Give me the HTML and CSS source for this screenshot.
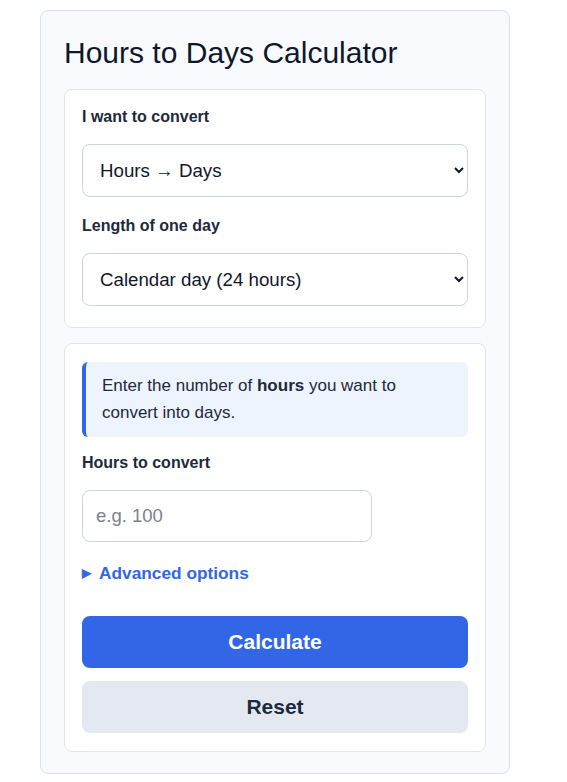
FILE: index.html
```html
<!DOCTYPE html>
<html lang="en">
<head>
  <meta charset="UTF-8">
  <title>Hours to Days Calculator</title>
  <meta name="viewport" content="width=device-width, initial-scale=1">
  <link rel="stylesheet" href="styles.css">
</head>
<body>

  <div class="calc">
    <h1>Hours to Days Calculator</h1>

    <!-- settings -->
    <div class="panel">
      <label class="field-label" for="mode">I want to convert</label>
      <select id="mode" class="field">
        <option>Hours → Days</option>
        <option>Days → Hours</option>
      </select>

      <label class="field-label" for="dayLength">Length of one day</label>
      <select id="dayLength" class="field">
        <option>Calendar day (24 hours)</option>
        <option>Work day (8 hours)</option>
      </select>
    </div>

    <!-- input -->
    <div class="panel">
      <div class="hint">
        Enter the number of <b>hours</b> you want to convert into days.
      </div>

      <label class="field-label" for="hours">Hours to convert</label>
      <input id="hours" class="field field-short" type="text" placeholder="e.g. 100">

      <details class="advanced">
        <summary>Advanced options</summary>
      </details>

      <button class="btn btn-primary">Calculate</button>
      <button class="btn btn-secondary">Reset</button>
    </div>
  </div>

</body>
</html>
```

FILE: styles.css
```css
body {
  margin: 0;
  padding: 10px 0 8px 40px;
  font-family: "Liberation Sans", Arial, sans-serif;
  background: #fff;
  color: #1e293b;
}
.calc {
  width: 470px;
  box-sizing: border-box;
  background: #f8fafd;
  border: 1px solid #dbe2ec;
  border-radius: 8px;
  padding: 0 23px 21px;
}
h1 {
  margin: 0;
  padding: 25px 0 20px;
  font-size: 30px;
  font-weight: normal;
  line-height: 33px;
  color: #0f172a;
}
.panel {
  background: #fff;
  border: 1px solid #dfe5ee;
  border-radius: 8px;
  padding: 17px 17px 21px;
  margin-bottom: 15px;
}
.panel:last-child {
  margin-bottom: 0;
  padding-top: 18px;
  padding-bottom: 18px;
}
.field-label {
  display: block;
  font-size: 16px;
  font-weight: bold;
  line-height: 20px;
  margin-bottom: 17px;
  color: #1e293b;
}
.field {
  display: block;
  width: 100%;
  height: 53px;
  box-sizing: border-box;
  border: 1px solid #cbd5e1;
  border-radius: 8px;
  background: #fff;
  padding: 0 13px;
  font-family: inherit;
  font-size: 18.7px;
  color: #0f172a;
  margin-bottom: 19px;
}
.panel select.field:last-child {
  margin-bottom: 0;
}
.field-short {
  width: 290px;
  height: 52px;
  font-size: 18.5px;
  margin-bottom: 20px;
}
.field-short::placeholder {
  color: #7a8290;
}
.hint {
  background: #eef4fd;
  border-left: 4px solid #3366e6;
  border-radius: 6px;
  padding: 10px 16px 11px;
  font-size: 17px;
  line-height: 27px;
  color: #1e293b;
  margin-bottom: 16px;
}
.advanced summary {
  list-style: none;
  display: flex;
  align-items: center;
  gap: 8px;
  color: #3366e6;
  font-weight: bold;
  font-size: 17.3px;
  line-height: 22px;
  cursor: pointer;
  margin: 0 0 32px;
}
.advanced summary::-webkit-details-marker {
  display: none;
}
.advanced summary::before {
  content: "▶";
  font-size: 12px;
}
.btn {
  display: block;
  width: 100%;
  height: 52px;
  border: none;
  border-radius: 8px;
  font-family: inherit;
  font-size: 21px;
  font-weight: bold;
  cursor: pointer;
}
.btn-primary {
  background: #3366e6;
  color: #fff;
  margin-bottom: 13px;
}
.btn-secondary {
  background: #e4e8f0;
  color: #1e293b;
}
```
